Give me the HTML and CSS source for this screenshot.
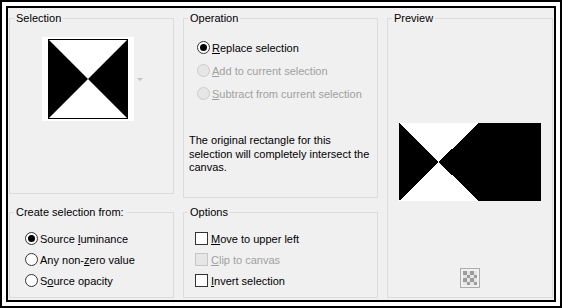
FILE: index.html
```html
<!DOCTYPE html>
<html>
<head>
<meta charset="utf-8">
<link rel="stylesheet" href="styles.css">
</head>
<body>
<div class="frame">
  <div class="dialog">
    <fieldset class="group sel">
      <legend>Selection</legend>
      <div class="thumb-row">
        <div class="thumb">
          <svg width="80" height="80" viewBox="0 0 80 80">
            <rect x="0" y="0" width="80" height="80" fill="#fff"/>
            <polygon points="0,0 40,40 0,80" fill="#000"/>
            <polygon points="80,0 40,40 80,80" fill="#000"/>
            <rect x="0" y="0" width="80" height="1" fill="#000"/>
            <rect x="0" y="79" width="80" height="1" fill="#000"/>
          </svg>
        </div>
        <span class="drop-arrow"></span>
      </div>
    </fieldset>

    <fieldset class="group op">
      <legend>Operation</legend>
      <div class="opts op-opts">
        <div class="row"><span class="radio on"></span><span><u>R</u>eplace selection</span></div>
        <div class="row off"><span class="radio dis"></span><span><u>A</u>dd to current selection</span></div>
        <div class="row off"><span class="radio dis"></span><span><u>S</u>ubtract from current selection</span></div>
      </div>
      <p class="note">The original rectangle for this selection will completely intersect the canvas.</p>
    </fieldset>

    <fieldset class="group prev">
      <legend>Preview</legend>
      <div class="prev-body">
        <svg class="prev-img" width="142" height="78" viewBox="0 0 142 78" shape-rendering="crispEdges">
          <rect x="0" y="0" width="142" height="78" fill="#fff"/>
          <polygon points="0,0 39.5,39 0,78" fill="#000"/>
          <polygon points="80,0 39.5,39 80,78" fill="#000"/>
          <rect x="79" y="0" width="63" height="78" fill="#000"/>
        </svg>
        <svg class="checker" width="20" height="20" viewBox="0 0 20 20" shape-rendering="crispEdges">
          <rect x="0.5" y="0.5" width="19" height="19" fill="#f0f0f0" stroke="#acacac"/>
          <rect x="3" y="3" width="14" height="14" fill="#e4e4e4"/>
          <rect x="3" y="3" width="3.5" height="3.5" fill="#9c9c9c"/>
          <rect x="10" y="3" width="3.5" height="3.5" fill="#9c9c9c"/>
          <rect x="6.5" y="6.5" width="3.5" height="3.5" fill="#9c9c9c"/>
          <rect x="13.5" y="6.5" width="3.5" height="3.5" fill="#9c9c9c"/>
          <rect x="3" y="10" width="3.5" height="3.5" fill="#9c9c9c"/>
          <rect x="10" y="10" width="3.5" height="3.5" fill="#9c9c9c"/>
          <rect x="6.5" y="13.5" width="3.5" height="3.5" fill="#9c9c9c"/>
          <rect x="13.5" y="13.5" width="3.5" height="3.5" fill="#9c9c9c"/>
        </svg>
      </div>
    </fieldset>

    <fieldset class="group create">
      <legend>Create selection from:</legend>
      <div class="opts low-opts create-opts">
        <div class="row"><span class="radio on"></span><span>Source <u>l</u>uminance</span></div>
        <div class="row"><span class="radio"></span><span>Any non-<u>z</u>ero value</span></div>
        <div class="row"><span class="radio"></span><span>S<u>o</u>urce opacity</span></div>
      </div>
    </fieldset>

    <fieldset class="group options">
      <legend>Options</legend>
      <div class="opts low-opts check-opts">
        <div class="row"><span class="check"></span><span><u>M</u>ove to upper left</span></div>
        <div class="row off"><span class="check dis"></span><span><u>C</u>lip to canvas</span></div>
        <div class="row"><span class="check"></span><span><u>I</u>nvert selection</span></div>
      </div>
    </fieldset>
  </div>
</div>
</body>
</html>
```

FILE: styles.css
```css
html, body {
  margin: 0;
  padding: 0;
  background: #fff;
}

body {
  font-family: "Liberation Sans", Arial, sans-serif;
  font-size: 11px;
  color: #000;
}

.frame {
  width: 562px;
  height: 308px;
  box-sizing: border-box;
  border: 2px solid #000;
  padding: 4px;
  background: #fff;
}

.dialog {
  box-sizing: border-box;
  height: 100%;
  border: 2px solid #000;
  background: #f0f0f0;
  padding: 3px 1px 0 1px;
  display: grid;
  grid-template-columns: 165px 195px 166px;
  grid-template-rows: 187px 93px;
  grid-template-areas:
    "sel op prev"
    "create options prev";
  column-gap: 9px;
  row-gap: 7px;
}

.group {
  margin: 0;
  padding: 0;
  min-width: 0;
  box-sizing: border-box;
  border: 1px solid #dcdcdc;
}

.group legend {
  margin-left: 4px;
  padding: 0 2px;
  line-height: 14px;
  font-size: 11px;
}

.sel { grid-area: sel; height: 183px; }
.op { grid-area: op; }
.prev { grid-area: prev; }
.create { grid-area: create; }
.options { grid-area: options; }

/* Selection thumbnail */
.thumb-row {
  display: flex;
  align-items: center;
  padding: 12px 0 0 32px;
}

.thumb {
  background: #fff;
  padding: 2px 6px;
  display: flex;
}

.thumb svg { display: block; }

.drop-arrow {
  width: 0;
  height: 0;
  margin-left: 3px;
  border-left: 3px solid transparent;
  border-right: 3px solid transparent;
  border-top: 3px solid #c4c4c4;
}

/* option rows */
.opts {
  display: flex;
  flex-direction: column;
}

.row {
  display: flex;
  align-items: center;
  white-space: nowrap;
}

.row.off { color: #a0a0a0; }

.op-opts {
  padding: 11px 0 0 13px;
}

.op-opts .row { height: 23px; }

.low-opts {
  padding-top: 9px;
}

.low-opts .row { height: 21px; }

.create-opts { padding-left: 15px; }
.check-opts { padding-left: 11px; }

.radio {
  width: 13px;
  height: 13px;
  box-sizing: border-box;
  border: 1px solid #333;
  border-radius: 50%;
  background: #fff;
  margin-right: 2px;
  display: flex;
  align-items: center;
  justify-content: center;
  flex: none;
}

.radio.on::after {
  content: "";
  width: 7px;
  height: 7px;
  border-radius: 50%;
  background: #000;
}

.radio.dis {
  border-color: #cccccc;
  background: #e6e6e6;
}

.check {
  width: 13px;
  height: 13px;
  box-sizing: border-box;
  border: 1px solid #333;
  background: #fff;
  margin-right: 3px;
  flex: none;
}

.check.dis {
  border-color: #c6c6c6;
  background: #e6e6e6;
}

.note {
  margin: 29px 4px 0 5px;
  line-height: 13.5px;
}

/* Preview */
.prev-body {
  display: flex;
  flex-direction: column;
  align-items: center;
  padding-top: 98px;
}

.prev-img { display: block; }

.checker {
  display: block;
  margin-top: 67px;
}
```
